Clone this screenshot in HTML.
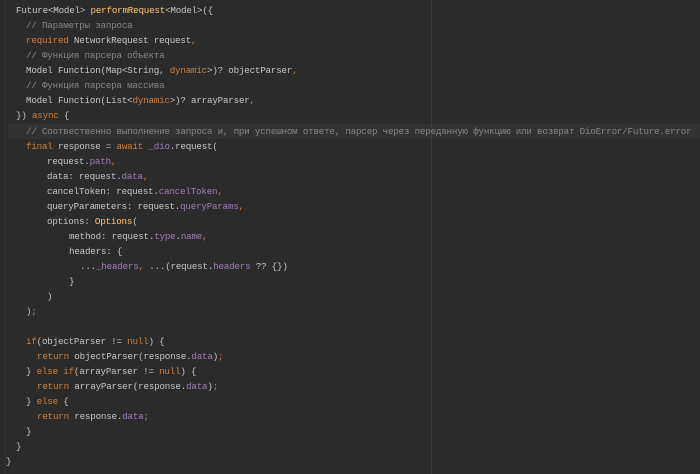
<!DOCTYPE html>
<html><head><meta charset="utf-8"><style>
html,body{margin:0;padding:0;width:700px;height:474px;overflow:hidden;background:#2b2b2b;}
.l{position:absolute;white-space:pre;font-family:"Liberation Mono","DejaVu Sans Mono",monospace;font-size:9.2px;letter-spacing:-0.19px;line-height:15px;height:15px;color:#c3c6cb;}
.k{color:#d0813a}.f{color:#ffc66d}.p{color:#a07db5}.c{color:#85868a}
.hl{position:absolute;left:8px;right:0;top:124px;height:15px;background:#323232;}
.vg{position:absolute;left:431px;top:0;width:1px;height:474px;background:#3a3a3a;}
.gut{position:absolute;left:5px;top:0;width:1px;height:474px;background:#353535;}
</style></head><body>
<div class="hl"></div><div class="vg"></div><div class="gut"></div>
<div class="l" style="top:3px;left:16px">Future&lt;Model&gt; <span class="f">performRequest</span>&lt;Model&gt;({</div>
<div class="l c" style="top:18px;left:26px">// Параметры запроса</div>
<div class="l" style="top:33px;left:26px"><span class="k">required</span> NetworkRequest request<span class="k">,</span></div>
<div class="l c" style="top:48px;left:26px">// Функция парсера объекта</div>
<div class="l" style="top:63px;left:26px">Model Function(Map&lt;String, <span class="k">dynamic</span>&gt;)? objectParser<span class="k">,</span></div>
<div class="l c" style="top:78px;left:26px">// Функция парсера массива</div>
<div class="l" style="top:93px;left:26px">Model Function(List&lt;<span class="k">dynamic</span>&gt;)? arrayParser<span class="k">,</span></div>
<div class="l" style="top:108px;left:16px">}) <span class="k">async</span> {</div>
<div class="l c" style="top:124px;left:26px">// Соотвественно выполнение запроса и, при успешном ответе, парсер через переданную функцию или возврат DioError/Future.error</div>
<div class="l" style="top:139px;left:26px"><span class="k">final</span> response = <span class="k">await</span> <span class="p">_dio</span>.request(</div>
<div class="l" style="top:154px;left:47px">request.<span class="p">path</span><span class="k">,</span></div>
<div class="l" style="top:169px;left:47px">data: request.<span class="p">data</span><span class="k">,</span></div>
<div class="l" style="top:184px;left:47px">cancelToken: request.<span class="p">cancelToken</span><span class="k">,</span></div>
<div class="l" style="top:199px;left:47px">queryParameters: request.<span class="p">queryParams</span><span class="k">,</span></div>
<div class="l" style="top:214px;left:47px">options: <span class="f">Options</span>(</div>
<div class="l" style="top:229px;left:69px">method: request.<span class="p">type</span>.<span class="p">name</span><span class="k">,</span></div>
<div class="l" style="top:244px;left:69px">headers: {</div>
<div class="l" style="top:259px;left:80px">...<span class="p">_headers</span><span class="k">,</span> ...(request.<span class="p">headers</span> ?? {})</div>
<div class="l" style="top:274px;left:69px">}</div>
<div class="l" style="top:289px;left:47px">)</div>
<div class="l" style="top:304px;left:26px">)<span class="k">;</span></div>
<div class="l" style="top:334px;left:26px"><span class="k">if</span>(objectParser != <span class="k">null</span>) {</div>
<div class="l" style="top:349px;left:37px"><span class="k">return</span> objectParser(response.<span class="p">data</span>)<span class="k">;</span></div>
<div class="l" style="top:364px;left:26px">} <span class="k">else if</span>(arrayParser != <span class="k">null</span>) {</div>
<div class="l" style="top:379px;left:37px"><span class="k">return</span> arrayParser(response.<span class="p">data</span>)<span class="k">;</span></div>
<div class="l" style="top:394px;left:26px">} <span class="k">else</span> {</div>
<div class="l" style="top:409px;left:37px"><span class="k">return</span> response.<span class="p">data</span><span class="k">;</span></div>
<div class="l" style="top:424px;left:26px">}</div>
<div class="l" style="top:439px;left:16px">}</div>
<div class="l" style="top:454px;left:6px">}</div>
</body></html>
